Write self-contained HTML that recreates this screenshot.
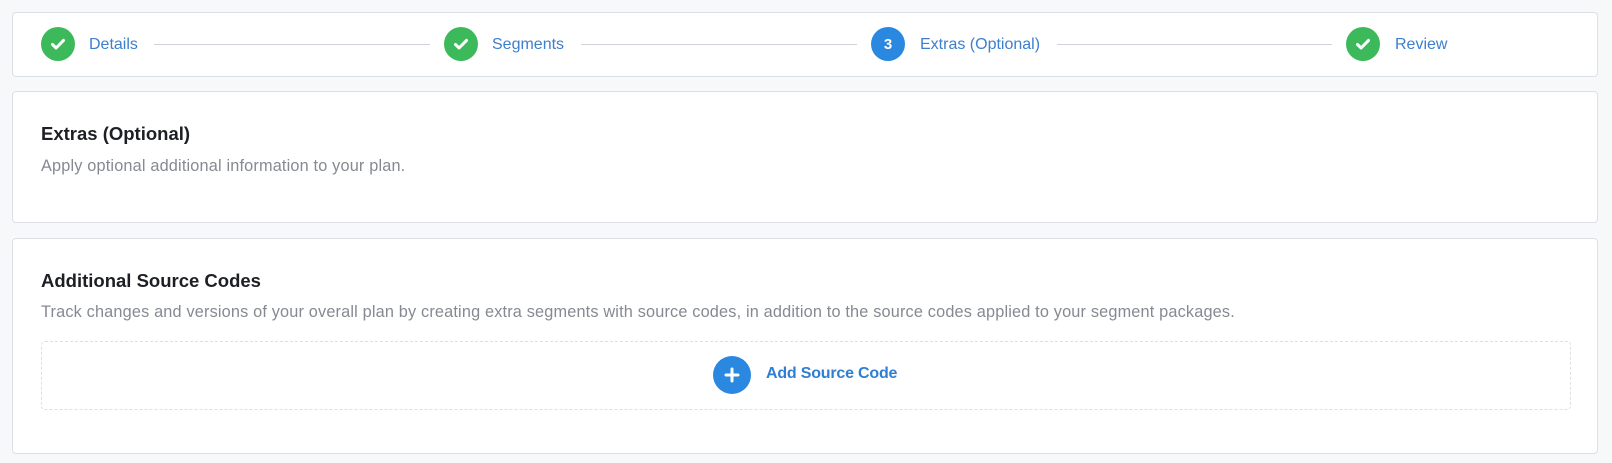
<!DOCTYPE html>
<html><head><style>
body{margin:0;width:1612px;height:463px;background:#f7f8fa;font-family:"Liberation Sans",sans-serif;position:relative;overflow:hidden}
.card{position:absolute;left:12px;width:1586px;background:#fff;border:1px solid #dcdfe4;border-radius:4px;box-sizing:border-box}
.ab{position:absolute}
.c{position:absolute;width:34px;height:34px;border-radius:50%;top:27px;display:flex;align-items:center;justify-content:center}
.g{background:#3cb95a}
.b{background:#2a88e0;color:#fff;font-weight:bold;font-size:15px}
.lbl{position:absolute;top:36px;font-size:16px;color:#3d7fcc}
.ln{position:absolute;top:44px;height:1px;background:#cfd3d9}
h{font-weight:bold;color:#1d1f24;font-size:18.5px;position:absolute;left:41px}
p{margin:0;position:absolute;left:41px;color:#858a92;font-size:16.3px;letter-spacing:0.17px}
</style></head><body>
<div class="card" style="top:12px;height:65px"></div>
<div class="c g" style="left:41px"><svg width="18" height="18" viewBox="0 0 18 18"><path d="M3.5 9.5l3.6 3.5 7.4-7.6" stroke="#fff" stroke-width="3" fill="none" stroke-linecap="round" stroke-linejoin="round"/></svg></div>
<div class="lbl" style="left:89px">Details</div>
<div class="ln" style="left:154px;width:276px"></div>
<div class="c g" style="left:444px"><svg width="18" height="18" viewBox="0 0 18 18"><path d="M3.5 9.5l3.6 3.5 7.4-7.6" stroke="#fff" stroke-width="3" fill="none" stroke-linecap="round" stroke-linejoin="round"/></svg></div>
<div class="lbl" style="left:492px">Segments</div>
<div class="ln" style="left:581px;width:276px"></div>
<div class="c b" style="left:871px">3</div>
<div class="lbl" style="left:920px">Extras (Optional)</div>
<div class="ln" style="left:1057px;width:275px"></div>
<div class="c g" style="left:1346px"><svg width="18" height="18" viewBox="0 0 18 18"><path d="M3.5 9.5l3.6 3.5 7.4-7.6" stroke="#fff" stroke-width="3" fill="none" stroke-linecap="round" stroke-linejoin="round"/></svg></div>
<div class="lbl" style="left:1395px">Review</div>

<div class="card" style="top:91px;height:132px"></div>
<h style="top:123px">Extras (Optional)</h>
<p style="top:157px">Apply optional additional information to your plan.</p>

<div class="card" style="top:238px;height:216px"></div>
<h style="top:270px">Additional Source Codes</h>
<p style="top:303px">Track changes and versions of your overall plan by creating extra segments with source codes, in addition to the source codes applied to your segment packages.</p>
<div class="ab" style="left:41px;top:341px;width:1530px;height:69px;border:1px dashed #dcdfe4;border-radius:4px;box-sizing:border-box"></div>
<div class="ab" style="left:713px;top:356px;width:38px;height:38px;border-radius:50%;background:#2a88e0"><svg width="38" height="38" viewBox="0 0 38 38"><path d="M19 13v12M13 19h12" stroke="#fff" stroke-width="3" stroke-linecap="round"/></svg></div>
<div class="ab" style="left:766px;top:365px;font-size:16px;color:#2f7ed4;font-weight:bold;letter-spacing:-0.2px">Add Source Code</div>
</body></html>
